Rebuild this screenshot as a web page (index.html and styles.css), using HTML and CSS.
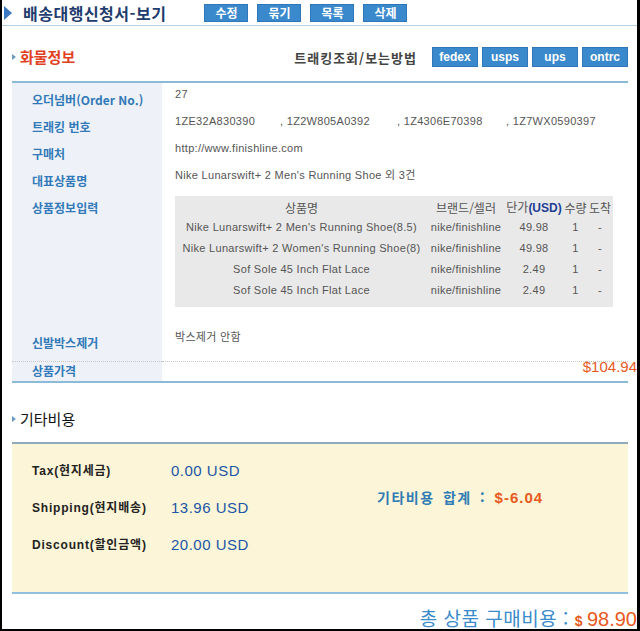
FILE: index.html
```html
<!DOCTYPE html>
<html lang="ko">

<head>
  <meta charset="UTF-8">
  <meta name="viewport" content="width=device-width, initial-scale=1.0">
  <title>배송대행신청서-보기</title>
  <link rel="stylesheet" href="styles.css">
</head>

<body>
  <div class="page">
    <div class="topbar">
      <span class="bigtri"></span>
      <h1>배송대행신청서-보기</h1>
      <div class="topbtns">
        <a class="btn">수정</a>
        <a class="btn">묶기</a>
        <a class="btn">목록</a>
        <a class="btn">삭제</a>
      </div>
    </div>

    <div class="sechead">
      <h2 class="red"><span class="tri"></span>화물정보</h2>
      <div class="track">
        <span class="tracklabel">트래킹조회/보는방법</span>
        <a class="tbtn">fedex</a>
        <a class="tbtn">usps</a>
        <a class="tbtn">ups</a>
        <a class="tbtn">ontrc</a>
      </div>
    </div>

    <div class="info">
      <div class="row">
        <div class="lbl">오더넘버(Order No.)</div>
        <div class="val">27</div>
      </div>
      <div class="row">
        <div class="lbl">트래킹 번호</div>
        <div class="val trk">
          <span>1ZE32A830390</span>
          <span>, 1Z2W805A0392</span>
          <span>, 1Z4306E70398</span>
          <span>, 1Z7WX0590397</span>
        </div>
      </div>
      <div class="row">
        <div class="lbl">구매처</div>
        <div class="val">http://www.finishline.com</div>
      </div>
      <div class="row">
        <div class="lbl">대표상품명</div>
        <div class="val">Nike Lunarswift+ 2 Men's Running Shoe 외 3건</div>
      </div>
      <div class="row rowgoods">
        <div class="lbl">상품정보입력</div>
        <div class="val">
          <table class="goods">
            <colgroup>
              <col class="c1">
              <col class="c2">
              <col class="c3">
              <col class="c4">
              <col class="c5">
            </colgroup>
            <tr>
              <th>상품명</th>
              <th>브랜드/셀러</th>
              <th>단가<b>(USD)</b></th>
              <th>수량</th>
              <th>도착</th>
            </tr>
            <tr>
              <td>Nike Lunarswift+ 2 Men's Running Shoe(8.5)</td>
              <td>nike/finishline</td>
              <td>49.98</td>
              <td>1</td>
              <td>-</td>
            </tr>
            <tr>
              <td>Nike Lunarswift+ 2 Women's Running Shoe(8)</td>
              <td>nike/finishline</td>
              <td>49.98</td>
              <td>1</td>
              <td>-</td>
            </tr>
            <tr>
              <td>Sof Sole 45 Inch Flat Lace</td>
              <td>nike/finishline</td>
              <td>2.49</td>
              <td>1</td>
              <td>-</td>
            </tr>
            <tr>
              <td>Sof Sole 45 Inch Flat Lace</td>
              <td>nike/finishline</td>
              <td>2.49</td>
              <td>1</td>
              <td>-</td>
            </tr>
          </table>
        </div>
      </div>
      <div class="row rowbox">
        <div class="lbl">신발박스제거</div>
        <div class="val">박스제거 안함</div>
      </div>
      <div class="row rowprice">
        <div class="lbl">상품가격</div>
        <div class="val price">$104.94</div>
      </div>
    </div>

    <div class="sechead2">
      <h2><span class="tri"></span>기타비용</h2>
    </div>

    <div class="extra">
      <div class="costs">
        <div class="clbl">Tax(현지세금)</div>
        <div class="cval">0.00 USD</div>
        <div class="clbl">Shipping(현지배송)</div>
        <div class="cval">13.96 USD</div>
        <div class="clbl">Discount(할인금액)</div>
        <div class="cval">20.00 USD</div>
      </div>
      <div class="sum">기타비용 합계 : <span class="org">$-6.04</span></div>
    </div>

    <div class="total">총 상품 구매비용 : <span class="dollar">$</span><span class="amt">98.90</span></div>
  </div>
</body>

</html>
```

FILE: styles.css
```css
* {
  padding: 0;
  margin: 0;
  box-sizing: border-box;
}

body {
  font-family: "Liberation Sans", "Noto Sans CJK KR", sans-serif;
  font-size: 11px;
  color: #555;
  background-color: #fff;
}

.page {
  width: 640px;
  height: 631px;
  overflow: hidden;
  border-left: 2px solid #000;
  border-right: 3px solid #000;
  border-bottom: 2px solid #000;
}

/* title bar */
.topbar {
  display: flex;
  align-items: center;
  height: 26px;
  border-bottom: 1px solid #b3d0e6;
}

.bigtri {
  width: 0;
  height: 0;
  margin-left: 2px;
  border-left: 8px solid #3a78c2;
  border-top: 7px solid transparent;
  border-bottom: 7px solid transparent;
}

.topbar h1 {
  margin-left: 11px;
  font-family: "Noto Sans CJK KR", sans-serif;
  font-size: 16px;
  line-height: 20px;
  font-weight: bold;
  letter-spacing: 0.5px;
  color: #1f3c6e;
}

.topbtns {
  display: flex;
  gap: 9px;
  margin-left: 38px;
}

.btn,
.tbtn {
  display: block;
  background-color: #3b89cd;
  border: 1px solid #2f77b8;
  color: #fff;
  font-weight: bold;
  text-align: center;
}

.btn {
  width: 44px;
  height: 18px;
  font-family: "Noto Sans CJK KR", sans-serif;
  font-size: 12px;
  line-height: 16px;
}

/* section heads */
.sechead {
  display: flex;
  align-items: center;
  justify-content: space-between;
  margin: 0 9px 0 10px;
  padding: 21px 0 14px;
  border-bottom: 2px solid #8dbad6;
}

.sechead h2,
.sechead2 h2 {
  display: flex;
  align-items: center;
  font-family: "Noto Sans CJK KR", sans-serif;
  font-size: 15px;
  line-height: 20px;
}

.red {
  color: #e0401f;
}

.tri {
  width: 0;
  height: 0;
  margin-right: 4px;
  border-left: 4px solid #6b9cbf;
  border-top: 3px solid transparent;
  border-bottom: 3px solid transparent;
}

.track {
  display: flex;
  align-items: center;
  gap: 4px;
}

.tracklabel {
  margin-right: 11px;
  font-family: "Noto Sans CJK KR", sans-serif;
  font-size: 13px;
  font-weight: bold;
  letter-spacing: 1px;
  color: #444;
}

.tbtn {
  width: 46px;
  height: 20px;
  font-size: 12px;
  line-height: 18px;
}

/* info table */
.info {
  margin: 0 9px 0 10px;
  border-bottom: 2px solid #8dbad6;
}

.row {
  display: flex;
}

.lbl {
  flex: 0 0 150px;
  height: 27px;
  padding: 10px 0 0 20px;
  background-color: #eef2f8;
  font-family: "Noto Sans CJK KR", sans-serif;
  font-size: 12px;
  font-weight: bold;
  line-height: 14px;
  color: #3179b9;
}

.val {
  flex: 1;
  padding: 4px 0 0 13px;
  line-height: 14px;
  letter-spacing: 0.3px;
}

.trk {
  display: flex;
}

.trk span:nth-child(1) {
  width: 105px;
}

.trk span:nth-child(2) {
  width: 117px;
}

.trk span:nth-child(3) {
  width: 109px;
}

.rowgoods .lbl {
  height: 135px;
}

.rowgoods .val {
  padding-top: 5px;
}

.goods {
  width: 438px;
  table-layout: fixed;
  border-spacing: 0;
  padding: 3px 0 7px;
  background-color: #e9e9e9;
}

.c1 { width: 253px; }
.c2 { width: 76px; }
.c3 { width: 60px; }
.c4 { width: 23px; }
.c5 { width: 26px; }

.goods th {
  height: 17px;
  font-family: "Noto Sans CJK KR", sans-serif;
  font-size: 12px;
  font-weight: normal;
  color: #555;
  letter-spacing: 0;
  white-space: nowrap;
}

.goods th b {
  font-family: "Liberation Sans", sans-serif;
  color: #1d3f95;
}

.goods td {
  height: 21px;
  text-align: center;
  white-space: nowrap;
}

.rowbox .lbl {
  height: 36px;
  padding-top: 10px;
  border-bottom: 1px dotted #c8c8c8;
}

.rowbox .val {
  border-bottom: 1px dotted #c8c8c8;
}

.rowprice .lbl {
  height: 19px;
  padding-top: 2px;
}

.price {
  margin: -4px -9px 0 0;
  padding-top: 0;
  text-align: right;
  font-size: 15px;
  line-height: 18px;
  letter-spacing: 0;
  color: #e65a1f;
}

/* other costs */
.sechead2 {
  margin: 0 9px 0 10px;
  padding: 26px 0 13px;
  border-bottom: 2px solid #8fabbb;
}

.sechead2 h2 {
  font-weight: normal;
  color: #111;
}

.extra {
  display: flex;
  height: 150px;
  margin: 0 9px 0 10px;
  padding: 17px 0 0 20px;
  background-color: #fdf5d7;
  border-bottom: 2px solid #8ec0e2;
}

.costs {
  display: grid;
  grid-template-columns: 139px 206px;
  row-gap: 17px;
  align-content: start;
}

.clbl {
  font-family: "Liberation Sans", "Noto Sans CJK KR", sans-serif;
  font-size: 12px;
  font-weight: bold;
  line-height: 20px;
  letter-spacing: 0.8px;
  color: #222;
}

.cval {
  font-size: 15px;
  line-height: 20px;
  letter-spacing: 0.5px;
  color: #1b55a6;
}

.sum {
  margin-top: 26px;
  font-family: "Noto Sans CJK KR", sans-serif;
  font-size: 14px;
  font-weight: bold;
  line-height: 20px;
  letter-spacing: 1.5px;
  word-spacing: 3px;
  color: #2f7cb5;
}

.org {
  font-family: "Liberation Sans", sans-serif;
  font-size: 15px;
  letter-spacing: 1px;
  color: #e8591c;
}

.total {
  padding-top: 12px;
  text-align: right;
  font-family: "Noto Sans CJK KR", sans-serif;
  font-size: 19px;
  line-height: 24px;
  letter-spacing: 0.5px;
  color: #3a8bcb;
}

.dollar {
  font-family: "Liberation Sans", sans-serif;
  font-size: 14px;
  font-weight: bold;
  color: #e8591c;
}

.amt {
  margin-left: 4px;
  font-family: "Liberation Sans", sans-serif;
  font-size: 20px;
  letter-spacing: 0;
  color: #e8591c;
}
```
